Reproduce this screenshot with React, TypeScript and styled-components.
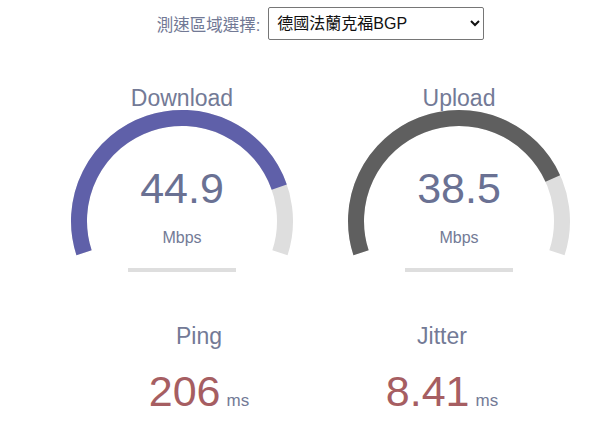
import React from 'react';
import styled, { createGlobalStyle } from 'styled-components';

const GlobalStyle = createGlobalStyle`
    html, body {
        margin: 0;
        padding: 0;
        background: #FFF;
        overflow: hidden;
    }
    body {
        font-family: "Liberation Sans", "Noto Sans CJK TC", sans-serif;
    }
`;

// content column sits a little right of the window's centre, as in the shot
const Page = styled.div`
    box-sizing: border-box;
    width: 100%;
    padding: 7px 0 0 32px;
`;

const SelectorRow = styled.div`
    display: flex;
    justify-content: center;
    align-items: center;
    gap: 8px;
    height: 33px;
`;

const SelectorLabel = styled.label`
    font-family: "Liberation Sans", "Noto Sans CJK TC", sans-serif;
    font-size: 16.5px;
    color: #727995;
`;

const ServerSelect = styled.select`
    width: 216px;
    height: 33px;
    padding: 0 4px;
    font-family: "Liberation Sans", "Noto Sans CJK TC", sans-serif;
    font-size: 16px;
    color: #111;
    background: #FFF;
    border: 1px solid #767676;
    border-radius: 2px;
`;

const GaugeRow = styled.div`
    display: flex;
    justify-content: center;
    margin-top: 47px;
`;

const GaugeCard = styled.div`
    width: 277px;
    display: flex;
    flex-direction: column;
    align-items: center;
`;

const GaugeName = styled.div`
    font-size: 23px;
    line-height: 22px;
    color: #737a96;
`;

const GaugeFace = styled.div`
    position: relative;
    width: 240px;
    height: 165px;
`;

const GaugeValue = styled.div`
    position: absolute;
    top: 58px;
    left: 0;
    right: 0;
    text-align: center;
    font-size: 43px;
    line-height: 43px;
    color: #6a7193;
`;

const GaugeUnit = styled.div`
    position: absolute;
    top: 121px;
    left: 0;
    right: 0;
    text-align: center;
    font-size: 16px;
    line-height: 16px;
    color: #737a96;
`;

const StatRow = styled.div`
    display: flex;
    justify-content: center;
    margin-top: 51px;
`;

const StatCard = styled.div`
    width: 243px;
    display: flex;
    flex-direction: column;
    align-items: center;
`;

const StatName = styled.div`
    font-size: 23px;
    line-height: 22px;
    color: #737a96;
`;

const StatValue = styled.div`
    margin-top: 23px;
    font-size: 43px;
    line-height: 43px;
    color: #a65e62;
`;

const StatUnit = styled.span`
    margin-left: 6px;
    font-size: 17px;
    color: #737a96;
`;

const CX = 120;
const CY = 112;
const R = 103;
const START = -198;
const SWEEP = 216;

const point = (deg: number) => {
    const a = (deg * Math.PI) / 180;
    return `${(CX + R * Math.cos(a)).toFixed(2)} ${(CY + R * Math.sin(a)).toFixed(2)}`;
};

const arc = (from: number, to: number) =>
    `M ${point(from)} A ${R} ${R} 0 ${to - from > 180 ? 1 : 0} 1 ${point(to)}`;

// same curve as librespeed: 1 - 1/1.3^sqrt(mbps)
const amount = (mbps: number) => 1 - 1 / Math.pow(1.3, Math.sqrt(mbps));

type GaugeProps = { name: string; value: string; color: string };

const Gauge = ({ name, value, color }: GaugeProps) => {
    const end = START + SWEEP * amount(parseFloat(value));
    return (
        <GaugeCard>
            <GaugeName>{name}</GaugeName>
            <GaugeFace>
                <svg width="240" height="165" viewBox="0 0 240 165">
                    <path d={arc(START, START + SWEEP)} fill="none" stroke="#dedede" strokeWidth="16" />
                    <path d={arc(START, end)} fill="none" stroke={color} strokeWidth="16" />
                    <rect x="66" y="159" width="108" height="4" fill="#dedede" />
                </svg>
                <GaugeValue>{value}</GaugeValue>
                <GaugeUnit>Mbps</GaugeUnit>
            </GaugeFace>
        </GaugeCard>
    );
};

const Stat = ({ name, value }: { name: string; value: string }) => (
    <StatCard>
        <StatName>{name}</StatName>
        <StatValue>
            {value}
            <StatUnit>ms</StatUnit>
        </StatValue>
    </StatCard>
);

const App = () => {
    return (
        <Page>
            <GlobalStyle />
            <SelectorRow>
                <SelectorLabel htmlFor="server">測速區域選擇:</SelectorLabel>
                <ServerSelect id="server" defaultValue="fra">
                    <option value="fra">德國法蘭克福BGP</option>
                    <option value="tpe">台灣台北</option>
                    <option value="hkg">香港</option>
                </ServerSelect>
            </SelectorRow>
            <GaugeRow>
                <Gauge name="Download" value="44.9" color="#5f60a9" />
                <Gauge name="Upload" value="38.5" color="#5f5f5f" />
            </GaugeRow>
            <StatRow>
                <Stat name="Ping" value="206" />
                <Stat name="Jitter" value="8.41" />
            </StatRow>
        </Page>
    );
};

export default App;
